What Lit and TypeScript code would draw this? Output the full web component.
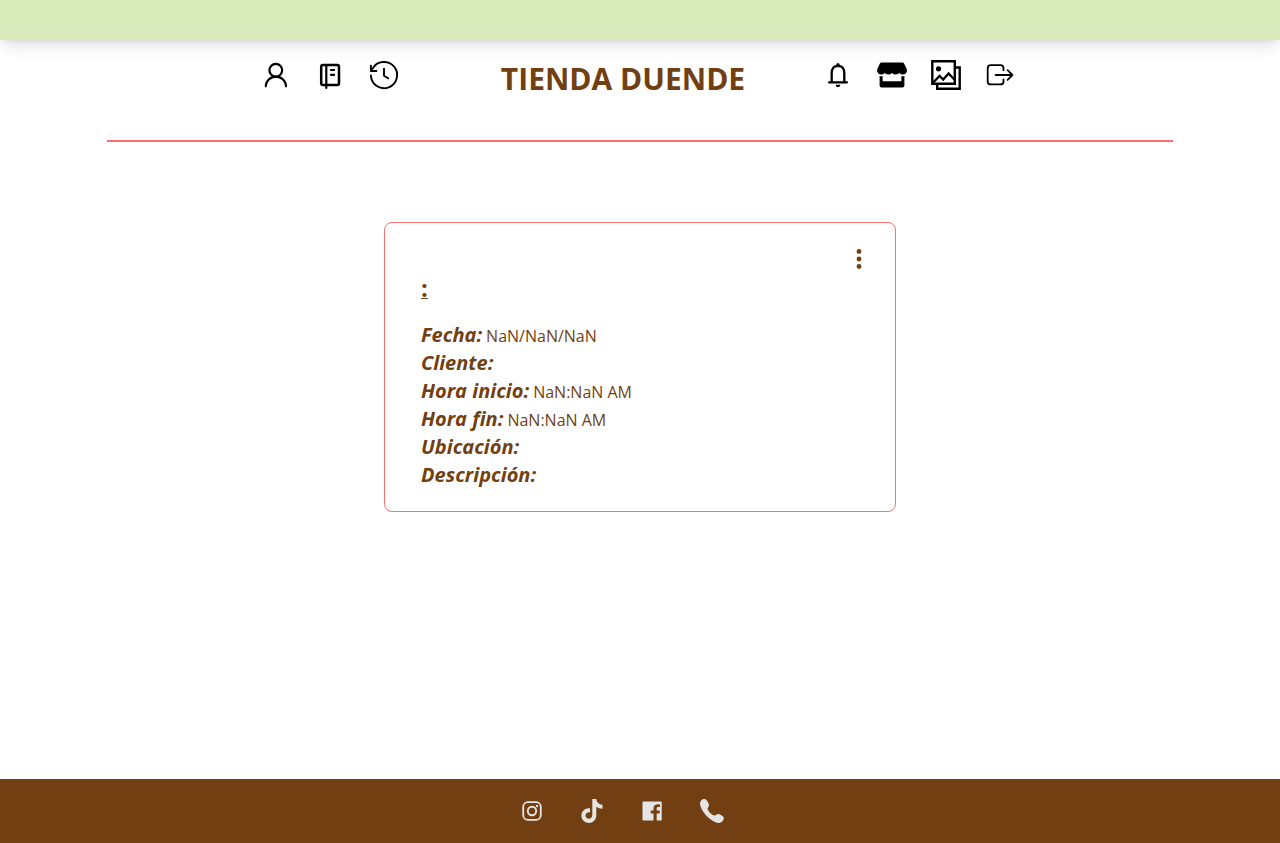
import { LitElement, html, css, svg } from "lit";
import { customElement } from "lit/decorators.js";

const icon = (size: number, body: unknown) => html`
  <svg width=${size} height=${size} viewBox="0 0 ${size} ${size}" fill="none" stroke="currentColor"
    stroke-linecap="round" stroke-linejoin="round" aria-hidden="true">${body}</svg>`;

const leftLinks = [
  { label: "Perfil", art: svg`<g stroke-width="2.2"><circle cx="14.8" cy="10.3" r="6.4"/><path d="M4.8 26.3a10 9.6 0 0 1 20.2 0"/></g>` },
  { label: "Agenda", art: svg`<g stroke-width="2.5"><rect x="6.2" y="5" width="17.8" height="20" rx="1.8"/><path d="M11.3 5v23M15.9 10h3.2M15.9 14.8h3.2" stroke-width="2.2"/></g>` },
  { label: "Historial", art: svg`<g stroke-width="1.9"><path d="M1.9 15.5A13.1 13.1 0 1 0 3.6 8.6L2.2 10.8"/><path d="M1.9 5.8v5.2h5.6M15 8.7v7l4.2 2.6"/></g>` },
];

const rightLinks = [
  { label: "Notificaciones", art: svg`<path d="M8.7 22V13.4Q8.7 5.9 15 5.9t6.3 7.5V22" stroke-width="2.3"/><path d="M6 22.3h18" stroke-width="2.2"/><path d="M15 4.6v1" stroke-width="3.2"/><path d="M12.6 24.8h4.8a2.4 2.4 0 0 1-4.8 0z" fill="currentColor" stroke="none"/>` },
  { label: "Tienda", art: svg`<g fill="currentColor" stroke="none"><path d="M4.6 2.4h20.8q1.2 0 1.7 1l2.5 5.3q.9 2.2-.3 4-1.3 1.9-3.5 1.9-2.1 0-3.6-1.6-1.5 1.6-3.6 1.6-2.1 0-3.6-1.6-1.5 1.6-3.6 1.6-2.1 0-3.6-1.6-1.5 1.6-3.6 1.6-2.2 0-3.4-1.9-1.3-1.8-.4-4L2.9 3.4q.5-1 1.7-1z"/><path d="M2.6 15.9q1.300.5 3 .1V21.300h18.800V16q1.700.4 3-.1v9.600q0 2-2 2H4.600q-2 0-2-2z"/></g>` },
  { label: "Galería", art: svg`<g stroke-width="2.4" stroke-linecap="butt" stroke-linejoin="miter"><path d="M1.3 1.3h22.500v22.500H1.300z"/><path d="M24 7.500h4.700v21.200H6.200V24"/><path d="M2 22.800 8.600 16l3.600 3.600 5.400-6.200 6 6.400" stroke-width="2.3"/></g><circle cx="7.500" cy="8.800" r="2.600" fill="currentColor" stroke="none"/>` },
  { label: "Salir", art: svg`<g stroke-width="1.8"><path d="M18.500 10.200V8.200q0-3-3-3H5.700q-3 0-3 3v13.200q0 3 3 3h9.800q3 0 3-3v-2"/><path d="M10.600 15h16.600M22.600 10.200l4.800 4.800-4.800 4.800"/></g>` },
];

const socialLinks = [
  { label: "Instagram", art: svg`<rect x="3.2" y="3.2" width="17.6" height="17.6" rx="4.6" stroke-width="1.8"/><circle cx="12" cy="12" r="4.2" stroke-width="1.9"/><circle cx="17" cy="7" r="1.2" fill="currentColor" stroke="none"/>` },
  { label: "TikTok", art: svg`<path fill="currentColor" stroke="none" d="M12.300 0h4c.2 2.900 2.300 5.500 6.200 5.700v4c-2.300 0-4.400-.6-6.200-1.900v8.400c0 4.600-3.500 7.700-7.400 7.700-4.100 0-7.500-3.200-7.500-7.400 0-4.500 3.900-7.900 8.600-7.300v4.200c-2.600-.6-4.500 1-4.500 3.100 0 1.900 1.500 3.300 3.400 3.300s3.400-1.500 3.400-3.700z"/>` },
  { label: "Facebook", art: svg`<path fill="currentColor" stroke="none" d="M3.300 2.500h17.600q.8 0 .8.800v17.400q0 .8-.8.800h-4.200v-6.900h2.800l.4-3h-3.200V9.700c0-1 .3-1.600 1.600-1.600H20V5.400c-3.900-.5-6.500.5-6.500 3.900v2.300h-2.800v3h2.800v6.900H3.300q-.8 0-.8-.8V3.300q0-.8.8-.8z"/>` },
  { label: "Teléfono", art: svg`<path fill="currentColor" stroke="none" d="M1.200 1.500C3 0 5-.4 6.100.700c1.500 1.600 2.700 3.700 2.900 5.200.1 1.800-1.700 2.700-1.400 4 .6 2.500 4.600 6.300 6.900 6.600 1.400.1 2-1.700 3.800-1.600 1.700.1 4 1.700 5.200 3.200 1 1.400-.1 3.700-1.700 5-2.300 1.700-6.900.6-11.700-3.200C5.300 16.200 1.500 11 .3 6.400-.2 4.300-.1 2.600 1.200 1.500z"/>` },
];

const fields = [
  ["Fecha:", "NaN/NaN/NaN"],
  ["Cliente:", ""],
  ["Hora inicio:", "NaN:NaN AM"],
  ["Hora fin:", "NaN:NaN AM"],
  ["Ubicación:", ""],
  ["Descripción:", ""],
];

@customElement("app-root")
export class AppRoot extends LitElement {
  static styles = css`
    :host {
      display: flex;
      flex-direction: column;
      min-height: 100vh;
      background: #fff;
      color: #713f12;
      font: 16px/24px "Segoe UI", "Open Sans", "Noto Sans", sans-serif;
    }
    * { box-sizing: border-box; }
    svg { display: block; overflow: visible; }
    a { color: inherit; text-decoration: none; }
    .topbar {
      height: 40px;
      background: #d9eaba;
      box-shadow: 0 10px 15px -3px rgb(0 0 0 / 0.1), 0 4px 6px -4px rgb(0 0 0 / 0.1);
    }
    .menu {
      display: flex;
      justify-content: center;
      gap: 78px;
      width: 83.3333%;
      height: 102px;
      margin: 0 auto;
      padding: 20px 4px 0 0;
      border-bottom: 2px solid #f87171;
    }
    .group { display: flex; gap: 24px; color: #000; }
    .group.left { padding-right: 24px; }
    .group a { height: 30px; }
    .title {
      margin: 0;
      font-size: 30px;
      line-height: 38px;
      font-weight: 700;
      white-space: nowrap;
    }
    main { flex: 1; padding: 80px 16px; }
    .card {
      width: 100%;
      max-width: 512px;
      margin: 0 auto;
      padding: 20px 20px 22px 36px;
      border: 1px solid #f87171;
      border-radius: 8px;
    }
    .more {
      display: block;
      width: 32px;
      height: 32px;
      margin-left: auto;
      padding: 0;
      border: 0;
      background: none;
      color: inherit;
      cursor: pointer;
    }
    .name {
      margin: 0 0 20px;
      font-size: 24px;
      line-height: 26px;
      font-weight: 700;
      text-decoration: underline 1px;
    }
    .fields { margin: 0; }
    .field { display: flex; align-items: baseline; gap: 4px; height: 28px; line-height: 28px; }
    .field dt { font-size: 20px; font-weight: 700; font-style: italic; }
    .field dd { margin: 0; }
    footer {
      display: flex;
      justify-content: center;
      padding: 20px 0;
      background: #713f12;
      color: #e5e5e5;
    }
    .social { height: 24px; margin-right: 36px; }
  `;

  render() {
    return html`
      <header>
        <div class="topbar"></div>
        <nav class="menu">
          <div class="group left">
            ${leftLinks.map((l) => html`<a href="#" aria-label=${l.label}>${icon(30, l.art)}</a>`)}
          </div>
          <h1 class="title">TIENDA DUENDE</h1>
          <div class="group">
            ${rightLinks.map((l) => html`<a href="#" aria-label=${l.label}>${icon(30, l.art)}</a>`)}
          </div>
        </nav>
      </header>
      <main>
        <article class="card">
          <button class="more" type="button" aria-label="Opciones">
            ${icon(32, svg`<g fill="currentColor" stroke="none"><circle cx="16" cy="8.5" r="2.4"/><circle cx="16" cy="16" r="2.4"/><circle cx="16" cy="23.5" r="2.4"/></g>`)}
          </button>
          <h2 class="name">:</h2>
          <dl class="fields">
            ${fields.map(([k, v]) => html`<div class="field"><dt>${k}</dt><dd>${v}</dd></div>`)}
          </dl>
        </article>
      </main>
      <footer>
        ${socialLinks.map((l) => html`<a class="social" href="#" aria-label=${l.label}>${icon(24, l.art)}</a>`)}
      </footer>
    `;
  }
}
